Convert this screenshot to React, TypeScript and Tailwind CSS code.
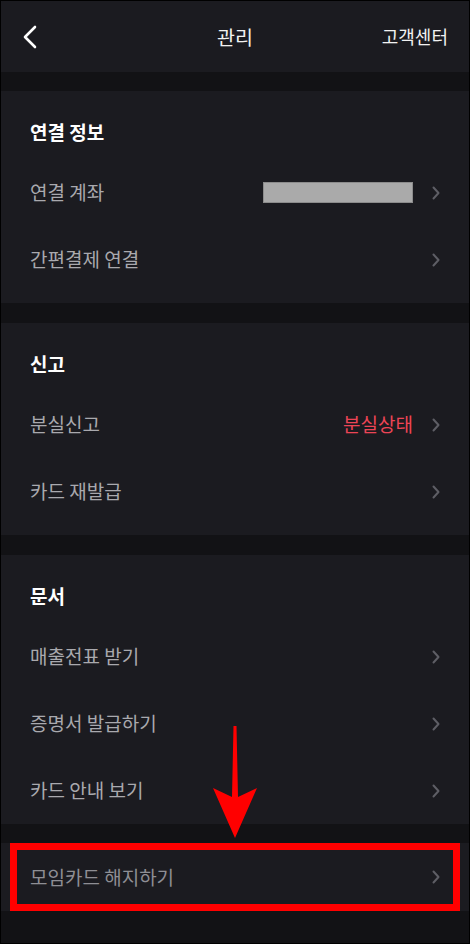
import React from "react";

type Row = { label: string; value?: string; valueRed?: boolean; masked?: boolean };

function Chevron() {
    return (
        <svg width="10" height="16" viewBox="0 0 10 16" fill="none" className="shrink-0">
            <path d="M2.5 2.5L7.5 8L2.5 13.5" stroke="#5e5e65" strokeWidth="2" strokeLinecap="round" strokeLinejoin="round" />
        </svg>
    );
}

function MenuRow({ row }: { row: Row }) {
    return (
        <div className="h-[67px] flex items-center pl-[29px] pr-[28px]">
            <span className="text-[19px] text-[#a9a9ae]">{row.label}</span>
            <div className="ml-auto flex items-center gap-[18px]">
                {row.masked && <div className="w-[150px] h-[21px] bg-[#aaaaaa] border border-[#8c8c8c]" />}
                {row.value && (
                    <span className={"text-[19px] " + (row.valueRed ? "text-[#ec4556]" : "text-[#a9a9ae]")}>{row.value}</span>
                )}
                <Chevron />
            </div>
        </div>
    );
}

function Section({ title, rows, pb }: { title: string; rows: Row[]; pb: string }) {
    return (
        <div className={"bg-[#1b1b20] " + pb}>
            <div className="h-[68px] pt-[28px] pl-[29px]">
                <h2 className="text-[19px] leading-[26px] font-bold text-white">{title}</h2>
            </div>
            {rows.map((r, i) => (
                <MenuRow key={i} row={r} />
            ))}
        </div>
    );
}

export default function App() {
    return (
        <div className="relative w-[470px] h-[944px] border border-black bg-[#121215] flex flex-col overflow-hidden font-['Noto_Sans_CJK_KR','Noto_Sans',sans-serif]">
            {/* top bar */}
            <div className="h-[71px] shrink-0 bg-[#1b1b20] flex items-center px-[21px] relative">
                <svg width="16" height="24" viewBox="0 0 16 24" fill="none">
                    <path d="M13 2L3 12L13 22" stroke="#ffffff" strokeWidth="2.6" strokeLinecap="round" strokeLinejoin="round" />
                </svg>
                <span className="absolute left-1/2 -translate-x-1/2 text-[19.5px] text-[#f2f2f2]">관리</span>
                <span className="ml-auto text-[18px] text-[#f2f2f2]">고객센터</span>
            </div>

            <div className="h-[19px] shrink-0" />
            <Section
                title="연결 정보"
                pb="pb-[10px]"
                rows={[{ label: "연결 계좌", masked: true }, { label: "간편결제 연결" }]}
            />

            <div className="h-[20px] shrink-0" />
            <Section
                title="신고"
                pb="pb-[10px]"
                rows={[{ label: "분실신고", value: "분실상태", valueRed: true }, { label: "카드 재발급" }]}
            />

            <div className="h-[20px] shrink-0" />
            <Section
                title="문서"
                pb="pb-0"
                rows={[{ label: "매출전표 받기" }, { label: "증명서 발급하기" }, { label: "카드 안내 보기" }]}
            />

            <div className="h-[19px] shrink-0" />
            <div className="relative bg-[#1b1b20] h-[68px] flex items-center pl-[29px] pr-[28px]">
                <span className="text-[19px] text-[#8e8e94]">모임카드 해지하기</span>
                <div className="ml-auto">
                    <Chevron />
                </div>
                {/* highlight box */}
                <div className="absolute left-[9px] right-[9px] top-0 bottom-0 border-[7px] border-[#ff0000]" />
            </div>

            {/* annotation arrow */}
            <svg className="absolute left-0 top-0 pointer-events-none" width="470" height="944" viewBox="0 0 470 944">
                <polygon
                    points="233.5,726 236.5,726 238,797 257,788 235,838 213,788 232,797"
                    fill="#ff0000"
                    transform="translate(-1,-1)"
                />
            </svg>
        </div>
    );
}
